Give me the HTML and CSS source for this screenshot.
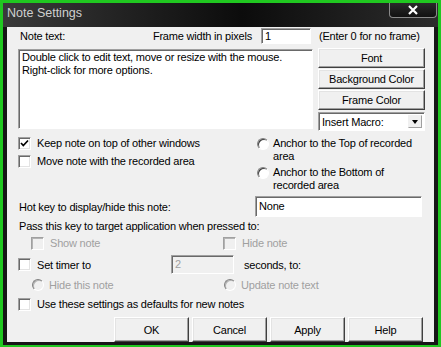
FILE: index.html
```html
<!DOCTYPE html>
<html lang="en">
  <head>
    <meta charset="UTF-8" />
    <title>Note Settings</title>
    <link rel="stylesheet" href="styles.css">
  </head>
  <body>
    <div class="window">
      <div class="titlebar">
        <span class="title">Note Settings</span>
        <span class="close">
          <svg width="12" height="10" viewBox="0 0 12 10"><path d="M2 1 L10 9 M10 1 L2 9" stroke="#fff" stroke-width="2.2" /></svg>
        </span>
      </div>
      <div class="client">
        <div class="top">
          <div class="row-frame">
            <span class="lbl-note">Note text:</span>
            <span>Frame width in pixels</span>
            <div class="field field-frame">1</div>
          </div>
          <div class="hint">(Enter 0 for no frame)</div>
          <div class="field note-text">Double click to edit text, move or resize with the mouse.<br>Right-click for more options.</div>
          <div class="side">
            <div class="btn">Font</div>
            <div class="btn">Background Color</div>
            <div class="btn">Frame Color</div>
            <div class="field combo">
              <span>Insert Macro:</span>
              <span class="combo-arrow"><span class="tri"></span></span>
            </div>
          </div>
        </div>

        <div class="options">
          <div class="opts-left">
            <div class="opt">
              <span class="check">
                <svg width="11" height="11" viewBox="0 0 11 11"><path d="M2 5 L4.3 7.5 L9 2.5" stroke="#000" stroke-width="1.7" fill="none" /></svg>
              </span>
              Keep note on top of other windows
            </div>
            <div class="opt"><span class="check"></span>Move note with the recorded area</div>
          </div>
          <div class="opts-right">
            <div class="radio-item"><span class="radio"></span><span>Anchor to the Top of recorded<br>area</span></div>
            <div class="radio-item"><span class="radio"></span><span>Anchor to the Bottom of<br>recorded area</span></div>
          </div>
        </div>

        <div class="lower">
          <div class="row-hotkey">
            <span class="lbl-hotkey">Hot key to display/hide this note:</span>
            <div class="field field-hotkey">None</div>
          </div>
          <div class="row-pass">Pass this key to target application when pressed to:</div>
          <div class="row-pair disabled">
            <div class="opt"><span class="check off"></span>Show note</div>
            <div class="opt"><span class="check off"></span>Hide note</div>
          </div>
          <div class="row-timer">
            <span class="check"></span>
            <span class="lbl-timer">Set timer to</span>
            <div class="field field-timer">2</div>
            <span class="lbl-seconds">seconds, to:</span>
          </div>
          <div class="row-pair row-radios disabled">
            <div class="opt"><span class="radio off"></span>Hide this note</div>
            <div class="opt"><span class="radio off"></span>Update note text</div>
          </div>
          <div class="row-use"><span class="check"></span>Use these settings as defaults for new notes</div>
          <div class="buttons">
            <div class="btn">OK</div>
            <div class="btn">Cancel</div>
            <div class="btn">Apply</div>
            <div class="btn">Help</div>
          </div>
        </div>
      </div>
    </div>
  </body>
</html>
```

FILE: styles.css
```css
body {
  margin: 0;
  background: #20c820;
  font-family: 'Liberation Sans', Arial, sans-serif;
  font-size: 11px;
  letter-spacing: -0.2px;
  color: #000;
}
.window {
  margin: 3px 3px 0;
  width: 435px;
  height: 342px;
  background: #161616;
  display: flex;
  flex-direction: column;
}
.titlebar {
  height: 24px;
  display: flex;
  align-items: flex-start;
  background: linear-gradient(to right, #3a3a3a, #202020 30%, #0c0c0c 55%, #1e1e1e 80%, #2c2c2c);
}
.title {
  font-size: 12.5px;
  letter-spacing: 0;
  color: #cfcfcf;
  padding: 3px 0 0 4px;
}
.close {
  margin-left: auto;
  margin-right: 1px;
  width: 46px;
  height: 14px;
  border: 1px solid #8a8a8a;
  border-top: 0;
  border-radius: 0 0 4px 4px;
  background: linear-gradient(#2a2a2a, #111);
  display: flex;
  align-items: center;
  justify-content: center;
}
.client {
  margin: 0 4px;
  height: 315px;
  background: #f0f0f0;
}

/* shared controls */
.field {
  box-sizing: border-box;
  background: #fff;
  border: 1px solid;
  border-color: #a0a0a0 #fff #fff #a0a0a0;
  box-shadow: inset 1px 1px #696969;
  padding-left: 3px;
}
.btn {
  box-sizing: border-box;
  background: #f0f0f0;
  border: 1px solid;
  border-color: #fff #404040 #404040 #fff;
  box-shadow: inset -1px -1px #a0a0a0, inset 1px 1px #e3e3e3;
  display: flex;
  align-items: center;
  justify-content: center;
}
.check {
  box-sizing: border-box;
  width: 13px;
  height: 13px;
  flex: none;
  margin-right: 6px;
  background: #fff;
  border: 1px solid;
  border-color: #a0a0a0 #fff #fff #a0a0a0;
  box-shadow: inset 1px 1px #696969, inset -1px -1px #e3e3e3;
  display: flex;
  align-items: center;
  justify-content: center;
}
.check.off {
  background: #f0f0f0;
  box-shadow: inset 1px 1px #b4b4b4;
}
.radio {
  box-sizing: border-box;
  width: 12px;
  height: 12px;
  flex: none;
  margin-right: 5px;
  border-radius: 50%;
  background: #fff;
  border: 1px solid;
  border-color: #808080 #fff #fff #808080;
  box-shadow: inset 1px 1px #404040;
}
.radio.off {
  background: #f0f0f0;
  box-shadow: inset 1px 1px #b4b4b4;
}
.disabled {
  color: #a0a0a0;
}

/* top section */
.top {
  display: grid;
  grid-template-columns: 295px 107px;
  column-gap: 5px;
  row-gap: 4px;
  margin-left: 11px;
  padding-top: 1px;
}
.row-frame {
  display: flex;
  align-items: center;
  height: 16px;
}
.lbl-note {
  padding-left: 2px;
  margin-right: auto;
}
.field-frame {
  width: 50px;
  height: 16px;
  margin: 0 2px 0 9px;
  line-height: 14px;
}
.hint {
  display: flex;
  align-items: center;
  padding-left: 1px;
}
.note-text {
  margin-top: 1px;
  height: 80px;
  padding: 1px 3px;
  line-height: 13px;
}
.side {
  display: flex;
  flex-direction: column;
  gap: 1px;
}
.side .btn {
  height: 20px;
}
.combo {
  margin-top: 1px;
  height: 19px;
  display: flex;
  align-items: center;
}
.combo-arrow {
  margin-left: auto;
  margin-right: 2px;
  width: 14px;
  height: 13px;
  box-sizing: border-box;
  border: 1px solid;
  border-color: #f0f0f0 #a0a0a0 #a0a0a0 #f0f0f0;
  background: #f0f0f0;
  display: flex;
  align-items: center;
  justify-content: center;
}
.tri {
  width: 0;
  height: 0;
  border-left: 3.5px solid transparent;
  border-right: 3.5px solid transparent;
  border-top: 4px solid #000;
}

/* options */
.options {
  display: flex;
  margin-top: 3px;
}
.opts-left {
  width: 250px;
  padding-left: 11px;
  box-sizing: border-box;
}
.opt {
  display: flex;
  align-items: center;
  height: 18px;
}
.opts-right {
  padding-top: 3px;
  display: flex;
  flex-direction: column;
  gap: 3px;
}
.radio-item {
  display: flex;
  align-items: flex-start;
  line-height: 13px;
}
.radio-item .radio {
  margin-top: 0.5px;
  margin-right: 4px;
}

/* lower section */
.lower {
  padding-left: 11px;
}
.row-hotkey {
  display: flex;
  align-items: center;
  height: 21px;
  margin-top: 4px;
}
.lbl-hotkey {
  width: 237px;
  padding-left: 1px;
  box-sizing: border-box;
}
.field-hotkey {
  width: 167px;
  height: 21px;
  line-height: 19px;
}
.row-pass {
  display: flex;
  align-items: center;
  height: 18px;
  padding-left: 1px;
}
.row-pair {
  display: grid;
  grid-template-columns: 192px auto;
  height: 16px;
  padding-left: 13px;
}
.row-pair .opt {
  height: 16px;
}
.row-timer {
  display: flex;
  align-items: center;
  height: 19px;
  margin-top: 4px;
}
.lbl-timer {
  width: 134px;
}
.field-timer {
  width: 63px;
  height: 19px;
  line-height: 17px;
  background: #f0f0f0;
  color: #a0a0a0;
}
.lbl-seconds {
  margin-left: 10px;
}
.row-radios {
  margin-top: 3px;
  padding-left: 14px;
}
.row-use {
  display: flex;
  align-items: center;
  height: 16px;
  margin-top: 3px;
}
.buttons {
  display: flex;
  gap: 3px;
  margin-top: 5px;
  padding-left: 96px;
}
.buttons .btn {
  width: 75px;
  height: 25px;
}
```
